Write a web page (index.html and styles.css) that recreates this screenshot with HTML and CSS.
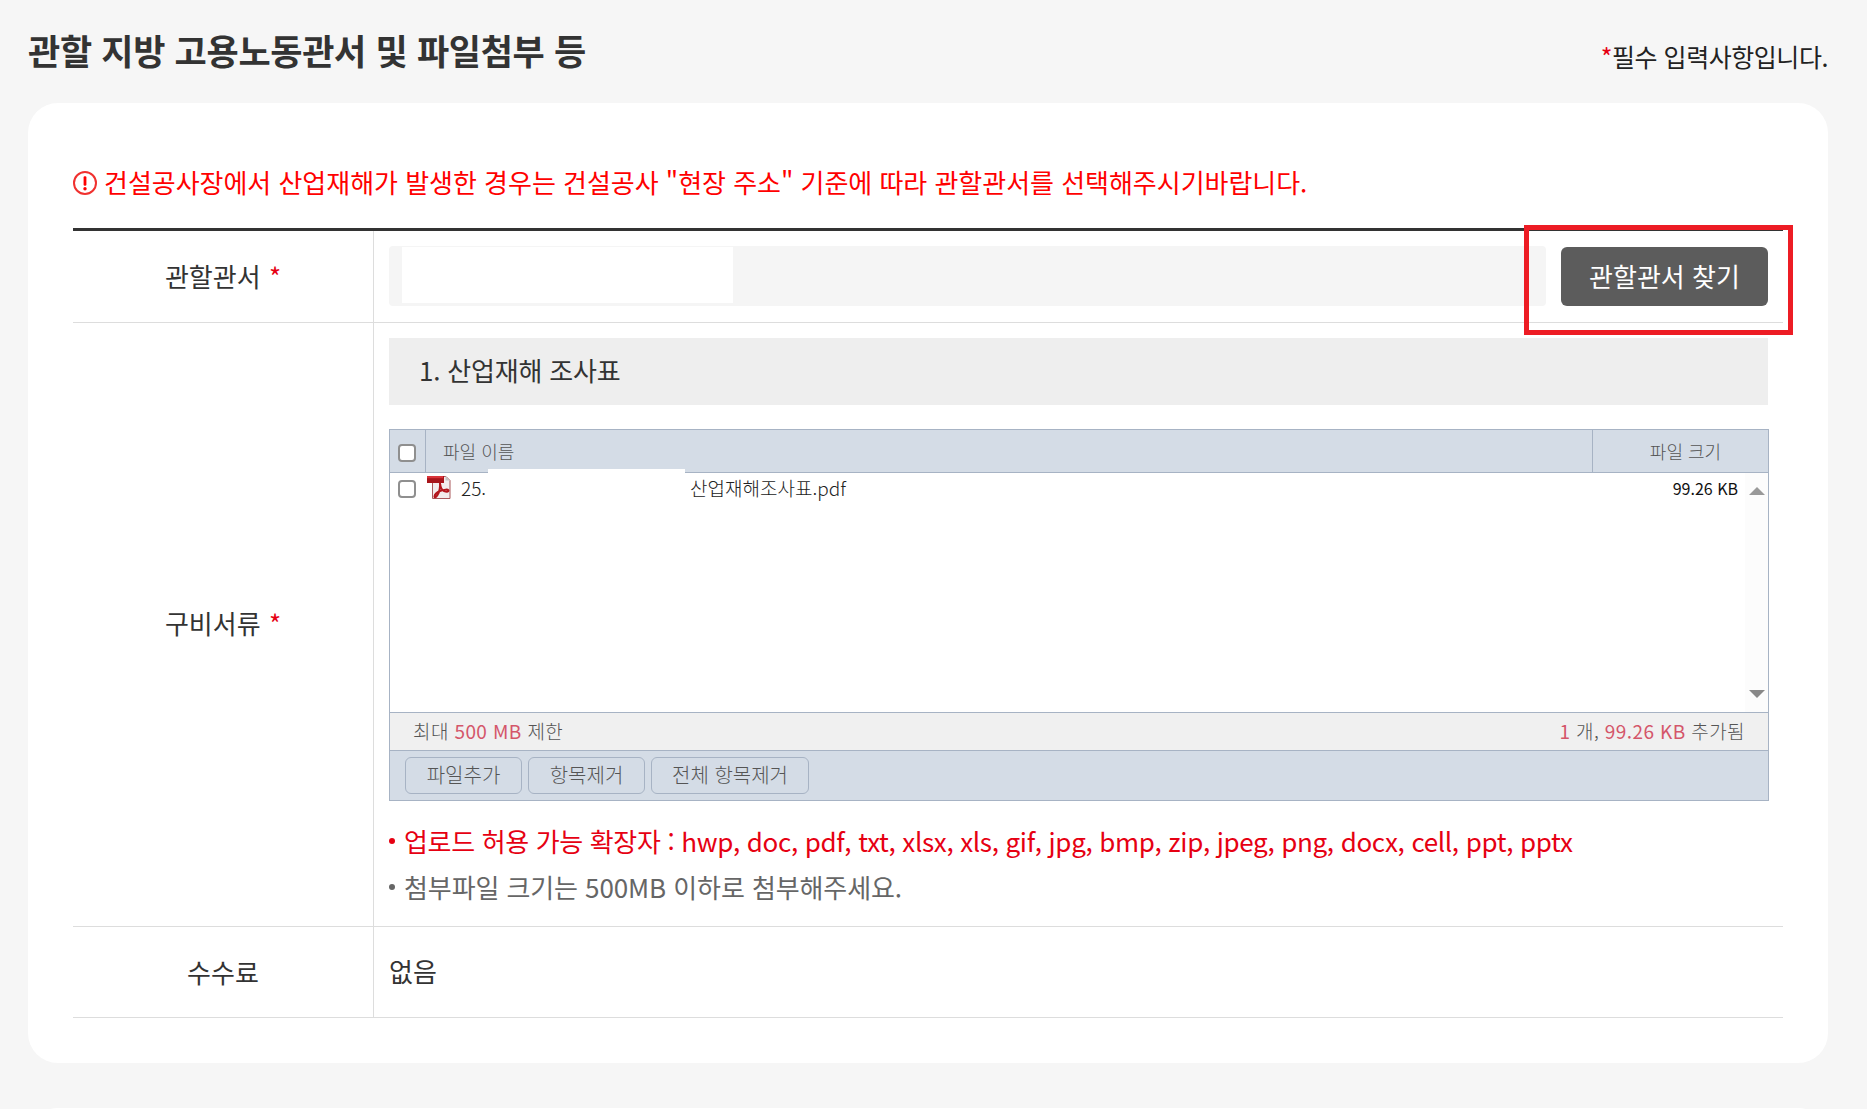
FILE: index.html
```html
<!DOCTYPE html>
<html lang="ko">
<head>
<meta charset="utf-8">
<title>관할 지방 고용노동관서 및 파일첨부 등</title>
<link rel="stylesheet" href="styles.css">
</head>
<body>
<header class="head">
  <h2 class="title">관할 지방 고용노동관서 및 파일첨부 등</h2>
  <p class="req"><span class="star">*</span>필수 입력사항입니다.</p>
</header>
<main class="card">
  <p class="notice">
    <svg class="alert" viewBox="0 0 24 24" width="24" height="24"><circle cx="12" cy="12" r="11" fill="none" stroke="#f0312f" stroke-width="2"/><rect x="10.6" y="5.2" width="2.8" height="9.6" rx="1.2" fill="#f00"/><circle cx="12" cy="17.8" r="1.7" fill="#f00"/></svg>
    <span>건설공사장에서 산업재해가 발생한 경우는 건설공사 "현장 주소" 기준에 따라 관할관서를 선택해주시기바랍니다.</span>
  </p>
  <div class="form">
    <div class="row row-office">
      <div class="label">관할관서 <span class="star">*</span></div>
      <div class="value office">
        <div class="input"><div class="mask"></div></div>
        <button class="find" type="button">관할관서 찾기</button>
        <div class="highlight"></div>
      </div>
    </div>
    <div class="row row-docs">
      <div class="label">구비서류 <span class="star">*</span></div>
      <div class="value docs">
        <div class="section">1. 산업재해 조사표</div>
        <div class="uploader">
          <div class="up-head">
            <div class="col-check"><span class="check"></span></div>
            <div class="col-name">파일 이름</div>
            <div class="col-size">파일 크기</div>
          </div>
          <div class="up-list">
            <div class="file">
              <span class="check file-check"></span>
              <svg class="pdf" viewBox="0 0 24 24" width="24" height="24">
                <path d="M5.5 1.5H19L23 5.5V23.5H5.5Z" fill="#f3ecec" stroke="#a9585b" stroke-width="1"/>
                <path d="M0 1H17V8H0Z" fill="#a8151b"/>
                <path d="M0 1H16V3.2H0Z" fill="#d9343a"/>
                <path d="M18.5 1L23 5.5H18.5Z" fill="#c4c4c4"/>
                <path d="M13 8C13.5 12.5 14.5 15 17 16C19.5 17 21.5 17 21.5 15.5C21.5 14 17 14.5 13 16C10 17.2 7.8 19.5 7.5 21.5C7.3 23 9 22.5 10.5 20C12 17.5 13.5 14 13 8Z" fill="none" stroke="#b4161c" stroke-width="2"/>
              </svg>
              <span class="fname">25.</span>
              <span class="fname fname-rest">산업재해조사표.pdf</span>
              <span class="fsize">99.26 KB</span>
            </div>
            <div class="scroll">
              <span class="arrow up"></span>
              <span class="arrow down"></span>
            </div>
            <div class="patch"></div>
          </div>
          <div class="up-info">
            <span>최대 <em>500 MB</em> 제한</span>
            <span><em>1</em> 개, <em>99.26 KB</em> 추가됨</span>
          </div>
          <div class="up-actions">
            <button class="ubtn b1" type="button">파일추가</button>
            <button class="ubtn b1" type="button">항목제거</button>
            <button class="ubtn b2" type="button">전체 항목제거</button>
          </div>
        </div>
        <ul class="hints">
          <li class="hint-red">업로드 허용 가능 확장자 : hwp, doc, pdf, txt, xlsx, xls, gif, jpg, bmp, zip, jpeg, png, docx, cell, ppt, pptx</li>
          <li class="hint-gray">첨부파일 크기는 500MB 이하로 첨부해주세요.</li>
        </ul>
      </div>
    </div>
    <div class="row row-fee">
      <div class="label">수수료</div>
      <div class="value fee">없음</div>
    </div>
  </div>
</main>
<div class="card next"></div>
</body>
</html>
```
FILE: styles.css
```css
* { box-sizing: border-box; }
html, body { margin: 0; height: 1109px; overflow: hidden; }
body {
  background: #f6f6f6;
  color: #333;
  font-family: "Noto Sans CJK KR", "Noto Sans", sans-serif;
  padding: 0 39px 0 28px;
}
.head { display: flex; justify-content: space-between; align-items: flex-start; height: 103px; }
.title { margin: 25px 0 0; font-size: 35px; line-height: 50px; font-weight: 700; letter-spacing: -.3px; color: #333; }
.req { margin: 38px 0 0; font-size: 25px; line-height: 36px; letter-spacing: -.45px; color: #222; }
.star { color: #e60012; }
.card { background: #fff; border-radius: 30px; padding: 0 45px 45px; height: 960px; }
.next { margin-top: 45px; }
.notice { margin: 0; height: 125px; padding-top: 59px; display: flex; gap: 7px; align-items: flex-start; font-size: 26px; line-height: 40px; letter-spacing: -.03px; color: #f00; }
.alert { margin-top: 9px; flex: none; }
.form { border-top: 3px solid #333; }
.row { display: grid; grid-template-columns: 301px 1fr; border-bottom: 1px solid #ddd; }
.label { border-right: 1px solid #ddd; display: flex; align-items: center; justify-content: center; gap: 1px; font-size: 26px; color: #333; padding-bottom: 2px; white-space: pre; }
.row-docs .label { padding-bottom: 4px; }
.value { padding: 15px; min-width: 0; }
.office { display: flex; gap: 15px; height: 91px; position: relative; }
.input { flex: 1; background: #f5f5f5; border-radius: 4px; height: 60px; padding: 1px 13px; }
.mask { width: 331px; height: 56px; background: #fff; }
.find { width: 207px; height: 59px; margin-top: 1px; border: 0; border-radius: 6px; background: #5c5c5c; color: #fff; font: 400 26px "Noto Sans CJK KR", sans-serif; padding: 0 0 2px; }
.highlight { position: absolute; left: 1150px; top: -6px; width: 269px; height: 110px; border: 5px solid #ed1c24; }
.docs { height: 603px; }
.section { height: 67px; background: #eee; padding-left: 30px; font-size: 26px; line-height: 63px; letter-spacing: -.2px; }
.uploader { margin: 24px -1px 0 0; border: 1px solid #a7b3c4; font-size: 18px; color: #555; }
.up-head { display: flex; height: 43px; background: #d4dce6; border-bottom: 1px solid #a7b3c4; line-height: 42px; font-weight: 300; }
.col-check { width: 36px; border-right: 1px solid #a7b3c4; padding: 14px 0 0 8px; }
.col-name { flex: 1; padding-left: 17px; border-right: 1px solid #a7b3c4; }
.col-size { width: 175px; padding-left: 10px; text-align: center; }
.check { display: block; width: 18px; height: 18px; border: 2px solid #8f8f8f; border-radius: 4px; background: #fff; }
.up-list { position: relative; height: 239px; display: flex; }
.file { flex: 1; height: 40px; display: flex; align-items: flex-start; padding-top: 2px; color: #222; font-size: 19px; font-weight: 300; }
.file-check { margin: 5px 0 0 8px; flex: none; }
.pdf { margin: 0 0 0 11px; flex: none; }
.fname { margin-left: 10px; line-height: 26px; }
.fname-rest { margin-left: 204px; }
.fsize { margin-left: auto; margin-right: 7px; line-height: 26px; font-size: 16px; font-weight: 400; color: #111; }
.scroll { width: 23px; background: #fcfcfc; position: relative; }
.arrow { position: absolute; left: 4px; width: 0; height: 0; border-left: 8px solid transparent; border-right: 8px solid transparent; }
.up { top: 14px; border-bottom: 8px solid #999; }
.down { top: 217px; border-top: 8px solid #888; }
.patch { position: absolute; left: 98px; top: -4px; width: 197px; height: 4px; background: #fff; }
.up-info { display: flex; justify-content: space-between; height: 39px; background: #f0f0f0; border-top: 1px solid #a7b3c4; border-bottom: 1px solid #a7b3c4; padding: 0 23px; font-size: 19px; letter-spacing: .4px; line-height: 35px; font-weight: 300; color: #555; }
.up-info em { font-style: normal; color: #d4566a; font-weight: 400; }
.up-actions { display: flex; gap: 6px; height: 49px; background: #d4dce6; padding: 6px 15px; }
.ubtn { height: 37px; border: 1px solid #a7b3c4; border-radius: 6px; background: #d4dce6; color: #555; font: 300 20px "Noto Sans CJK KR", sans-serif; padding: 0 0 2px; }
.b1 { width: 117px; }
.b2 { width: 158px; }
.hints { margin: 17px 0 0; padding: 0; list-style: none; font-size: 26px; line-height: 46px; }
.hints li { position: relative; padding-left: 15px; }
.hints li::before { content: ""; position: absolute; left: 0; top: 20px; width: 6px; height: 6px; border-radius: 50%; background: currentColor; }
.hint-red { color: #e60012; letter-spacing: -.35px; }
.hint-gray { color: #666; letter-spacing: -.1px; }
.row-fee { height: 91px; }
.fee { font-size: 26px; line-height: 58px; }
```
